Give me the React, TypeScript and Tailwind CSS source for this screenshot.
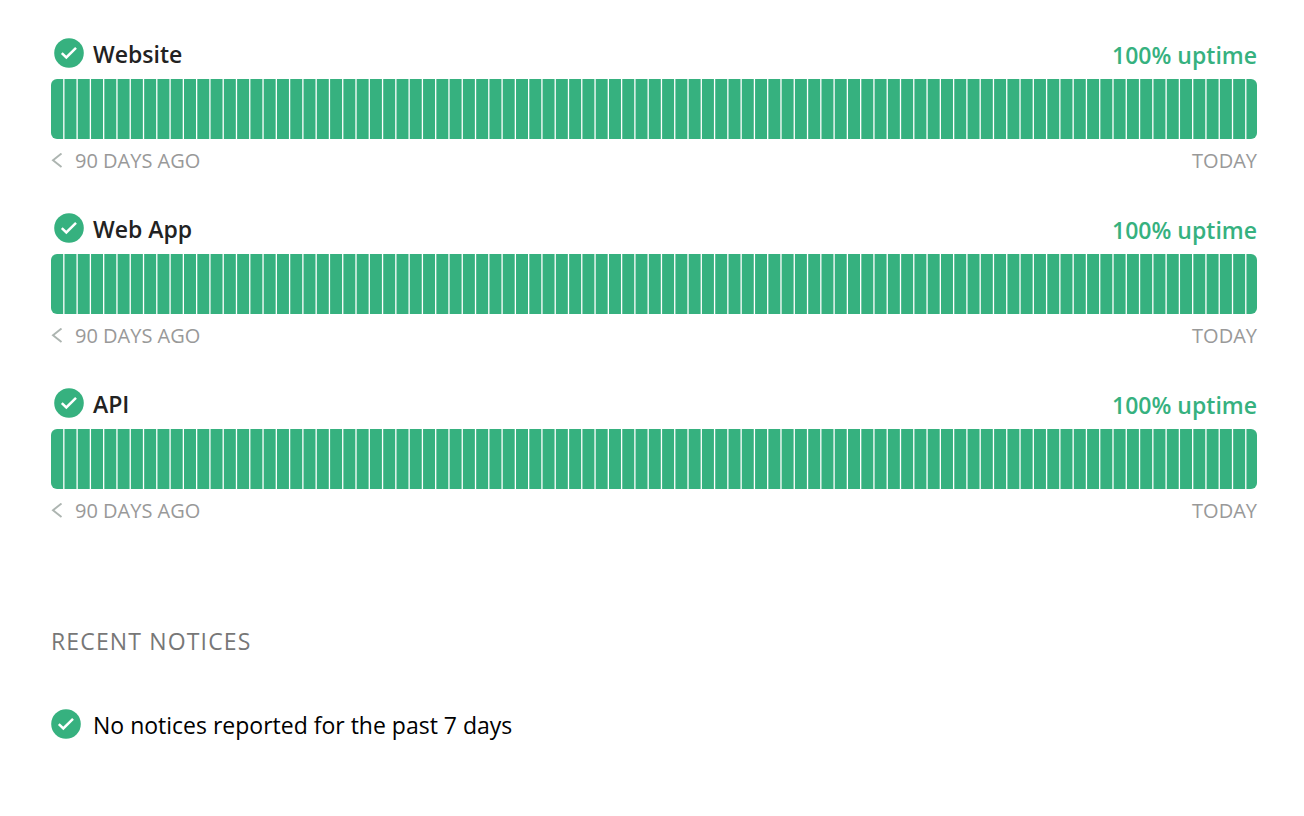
import React from 'react';

const DIVIDERS = 90;

interface Service {
  name: string;
  uptime: string;
}

const services: Service[] = [
  { name: 'Website', uptime: '100% uptime' },
  { name: 'Web App', uptime: '100% uptime' },
  { name: 'API', uptime: '100% uptime' },
];

function StatusIcon() {
  return (
    <svg className="h-[30px] w-[30px] shrink-0" viewBox="0 0 30 30" fill="none" aria-hidden="true">
      <circle cx="15" cy="15" r="14.8" fill="#36b17f" />
      <path d="M7.8 15.2 12.3 19.4 22 9.8" stroke="#fff" strokeWidth="2.5" />
    </svg>
  );
}

function UptimeChart({ label }: { label: string }) {
  // One bar per day, separated by thin white dividers
  const dividers = Array.from({ length: DIVIDERS }, (_, i) => 1.01 + i * 1.1012);

  return (
    <svg className="block h-[60px] w-full rounded-md bg-[#36b17f]" role="img" aria-label={label}>
      {dividers.map((x) => (
        <rect key={x} x={`${x}%`} y="0" width="1.3" height="60" fill="#fff" />
      ))}
    </svg>
  );
}

function ServiceRow({ name, uptime }: Service) {
  return (
    <section className="pb-[38px]">
      <div className="flex h-[41px] items-start justify-between">
        <div className="flex items-start gap-[9px] pl-[3px]">
          <StatusIcon />
          <h2 className="text-[23px] leading-8 font-semibold text-[#222]">{name}</h2>
        </div>
        <span className="text-[23px] leading-[34px] font-semibold text-[#36b17f]">{uptime}</span>
      </div>
      <UptimeChart label={`${name}: ${uptime}`} />
      <div className="mt-2 flex justify-between text-xl leading-7 text-[#999]">
        <span className="flex items-center gap-3">
          <svg className="h-4 w-3" viewBox="0 0 12 16" fill="none" aria-hidden="true">
            <path d="M10.5 0.5 2 7.2l8.5 6.8" stroke="#adb5b1" strokeWidth="1.9" />
          </svg>
          90 DAYS AGO
        </span>
        <span>TODAY</span>
      </div>
    </section>
  );
}

export default function App() {
  return (
    <main className="bg-white pt-[38px] pr-[47px] pl-[51px] font-['Open_Sans',sans-serif]">
      {services.map((service) => (
        <ServiceRow key={service.name} {...service} />
      ))}
      <section className="pt-[62px]">
        <h2 className="text-[23px] leading-8 tracking-wider text-[#777]">RECENT NOTICES</h2>
        <div className="mt-[52px] flex items-start gap-3">
          <StatusIcon />
          <p className="text-[23px] leading-8 text-black">No notices reported for the past 7 days</p>
        </div>
      </section>
    </main>
  );
}
